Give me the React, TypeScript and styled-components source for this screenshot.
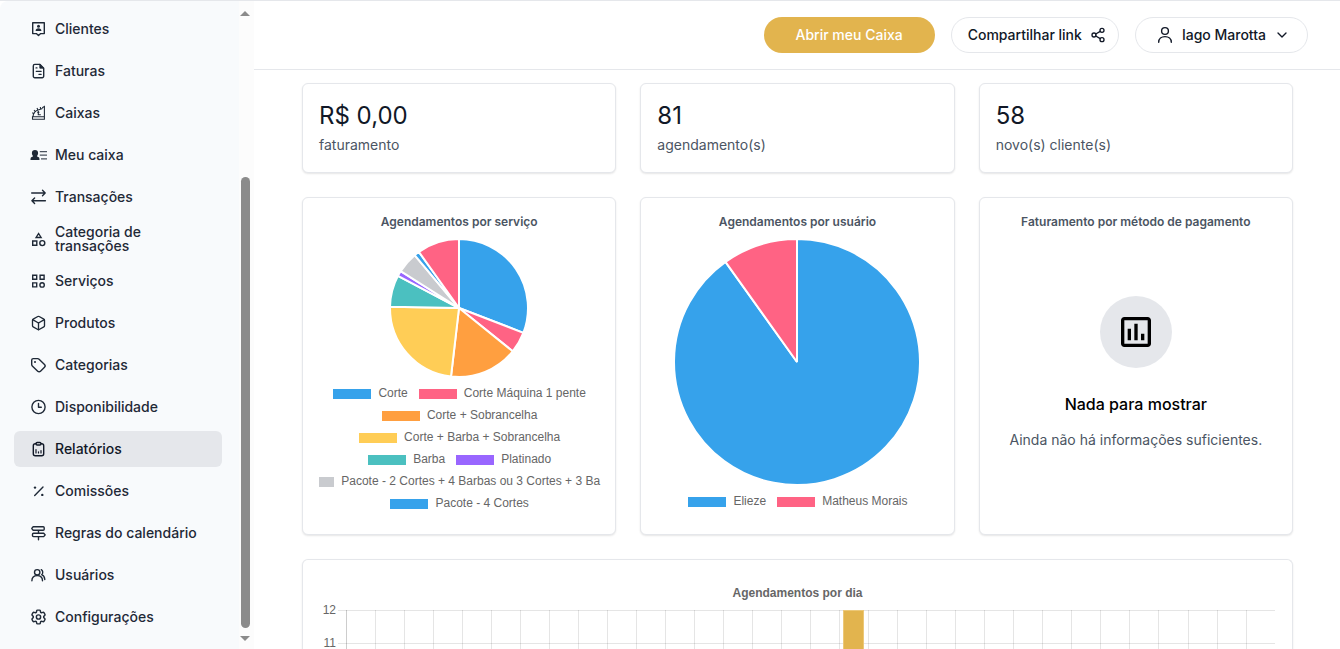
import React from "react";
import styled, { createGlobalStyle } from "styled-components";
import { MdOutlineAssessment } from "react-icons/md";
import { FiBox } from "react-icons/fi";
import { LuChevronDown, LuShare2 } from "react-icons/lu";

const GlobalStyle = createGlobalStyle`
  *, *::before, *::after { box-sizing: border-box; }
  body {
    margin: 0;
    background: #fff;
    color: #111827;
    font-family: Inter, "Liberation Sans", sans-serif;
    font-size: 14px;
    line-height: 20px;
  }
  h2, p, ul { margin: 0; padding: 0; }
`;

const Shell = styled.div`
  display: flex;
  height: 100vh;
  overflow: hidden;
  border-top: 1px solid #e5e7eb;
`;

const Sidebar = styled.aside`
  flex: 0 0 254px;
  display: flex;
  background: #f8fafc;
  border-top-left-radius: 8px;
`;

const Menu = styled.nav`
  flex: 1;
  display: flex;
  flex-direction: column;
  gap: 6px;
  padding: 10px 17px 0 14px;
`;

const MenuItem = styled.a<{ $active?: boolean }>`
  flex: none;
  display: flex;
  align-items: center;
  gap: 8px;
  height: 36px;
  padding: 0 16px;
  border-radius: 6px;
  background: ${(p) => (p.$active ? "#e5e7eb" : "transparent")};
  color: ${(p) => (p.$active ? "#111827" : "#1f2937")};
  font-weight: 500;
  line-height: 14px;
  text-decoration: none;
  svg { flex: none; width: 17px; height: 16px; }
`;

const ScrollTrack = styled.div`
  flex: 0 0 15px;
  display: flex;
  flex-direction: column;
  align-items: center;
  padding: 10px 3px 8px 0;
  background: #fcfcfc;
`;

const ScrollArrow = styled.span<{ $down?: boolean }>`
  border: 5px solid transparent;
  border-width: ${(p) => (p.$down ? "5px 5px 0" : "0 5px 5px")};
  border-color: ${(p) => (p.$down ? "#8b8b8b transparent transparent" : "transparent transparent #8b8b8b")};
`;

const ScrollRail = styled.div`
  flex: 1;
  display: flex;
  flex-direction: column;
  justify-content: flex-end;
  padding-bottom: 8px;
`;

const ScrollThumb = styled.div`
  width: 9px;
  height: calc(74% - 2px);
  border-radius: 5px;
  background: #8b8b8b;
`;

const Main = styled.main`
  flex: 1;
  min-width: 0;
  display: flex;
  flex-direction: column;
`;

const Header = styled.header`
  flex: none;
  display: flex;
  justify-content: flex-end;
  align-items: center;
  gap: 16px;
  height: 69px;
  padding-right: 32px;
  border-bottom: 1px solid #e5e7eb;
`;

const pillPadding = { primary: "0 32px", share: "0 12px 0 16px", user: "0 17px 0 20px" };

const PillButton = styled.button<{ $kind: keyof typeof pillPadding }>`
  display: flex;
  align-items: center;
  gap: 8px;
  height: 36px;
  padding: ${(p) => pillPadding[p.$kind]};
  border: ${(p) => (p.$kind === "primary" ? "0" : "1px solid #e5e7eb")};
  border-radius: 18px;
  background: ${(p) => (p.$kind === "primary" ? "#e2b44e" : "#fff")};
  color: ${(p) => (p.$kind === "primary" ? "#fff" : "#111827")};
  font-family: inherit;
  font-size: 14px;
  font-weight: 500;
  line-height: 20px;
`;

const Content = styled.div`
  flex: 1;
  display: grid;
  grid-template-columns: repeat(3, minmax(0, 1fr));
  grid-template-rows: auto auto 1fr;
  gap: 24px;
  padding: 13px 47px 0 48px;
  overflow: hidden;
`;

const Card = styled.section<{ $tall?: boolean; $full?: boolean }>`
  display: flex;
  flex-direction: column;
  min-height: ${(p) => (p.$tall ? "338px" : "90px")};
  grid-column: ${(p) => (p.$full ? "1 / -1" : "auto")};
  padding: 16px;
  border: 1px solid #e5e7eb;
  border-radius: 6px;
  box-shadow: 0 1px 2px rgba(0, 0, 0, 0.1);
  background: #fff;
  ${(p) => p.$full && "border-bottom: 0; border-bottom-left-radius: 0; border-bottom-right-radius: 0; padding-bottom: 0;"}
`;

const StatValue = styled.p`
  font-size: 24px;
  line-height: 32px;
`;

const StatLabel = styled.p`
  padding-top: 3px;
  color: #4b5563;
`;

const CardTitle = styled.h2`
  padding-bottom: 9px;
  color: #4b5563;
  font-size: 12px;
  font-weight: 600;
  line-height: 16px;
  text-align: center;
`;

const PieSvg = styled.svg<{ $size: number }>`
  flex: none;
  align-self: center;
  width: ${(p) => p.$size}px;
  height: ${(p) => p.$size}px;
`;

const Legend = styled.ul`
  padding-top: 5px;
  list-style: none;
  color: #666;
  font-family: "Liberation Sans", Arial, sans-serif;
  font-size: 12px;
`;

const LegendRow = styled.li`
  display: flex;
  justify-content: center;
  gap: 10px;
  height: 22px;
  line-height: 22px;
  white-space: nowrap;
`;

const LegendEntry = styled.span<{ $color: string; $narrow?: boolean }>`
  flex: none;
  display: flex;
  align-items: center;
  gap: 6px;
  &::before {
    content: "";
    width: ${(p) => (p.$narrow ? "17px" : "40px")};
    height: 12px;
    margin-top: 2px;
    border: 1px solid #fff;
    background: ${(p) => p.$color};
  }
`;

const Empty = styled.div`
  flex: 1;
  display: flex;
  flex-direction: column;
  align-items: center;
  padding-top: 57px;
  color: #4b5563;
`;

const EmptyIcon = styled.span`
  display: flex;
  align-items: center;
  justify-content: center;
  width: 72px;
  height: 72px;
  margin-bottom: 24px;
  border-radius: 50%;
  background: #e5e7eb;
  color: #000;
`;

const EmptyTitle = styled.p`
  padding-bottom: 14px;
  color: #000;
  font-size: 16px;
  font-weight: 500;
  line-height: 24px;
`;

const BarTitle = styled.h2`
  padding: 10px 0;
  color: #666;
  font: bold 12px/14px "Liberation Sans", Arial, sans-serif;
  text-align: center;
`;

const BarChart = styled.div`
  flex: 1;
  display: flex;
  gap: 2px;
`;

const Ticks = styled.div`
  flex: 0 0 17px;
  margin-top: -16px;
  color: #666;
  font: 12px/33px "Liberation Sans", Arial, sans-serif;
  text-align: right;
`;

const Plot = styled.svg`
  flex: 1;
  min-width: 0;
  height: 100%;
  margin-right: 1px;
  overflow: hidden;
`;

const line = {
  viewBox: "0 0 17 16",
  fill: "none",
  stroke: "currentColor",
  strokeWidth: 1.4,
  strokeLinecap: "round",
  strokeLinejoin: "round",
} as const;

const ClientIcon = () => (
  <svg {...line}>
    <path d="M2.700 1.700h11.600v10.900h-3.600l-2.200 2-2.200-2H2.700z" />
    <circle cx="8.5" cy="5.200" r="1.500" fill="currentColor" stroke="none" />
    <path d="M5.600 9.900c0-1.600 1.100-2.600 2.900-2.600s2.900 1 2.900 2.600z" fill="currentColor" stroke="none" />
  </svg>
);

const InvoiceIcon = () => (
  <svg {...line}>
    <path d="M4.800 1.400h5.200l3.700 3.800v8a1.500 1.500 0 0 1-1.500 1.500H4.800a1.500 1.500 0 0 1-1.500-1.500V2.900a1.500 1.500 0 0 1 1.500-1.500z" />
    <path d="M9.800 1.600v3.600h3.700z" fill="currentColor" strokeWidth="0.8" />
    <path d="M6 4.900h1M6.200 8.300h5M8.900 11.300h2.300" strokeWidth="1.200" />
  </svg>
);

const RegisterIcon = () => (
  <svg {...line} strokeWidth={1.1} strokeLinecap="butt" strokeLinejoin="miter">
    <path d="M12.200 2.700l2.200-1.200v12.700H2.500v-2.500h11.900M3 11.500c.3-3 2.300-5.700 5.200-6.500l4.300-1.500" />
    <path d="M2.200 7.800l2 1M4 5l1.600 1.800M7 3l.9 2M10.300 2l.4 2M8.300 6v3.800h2.500M7.300 7.400h2" />
  </svg>
);

const PersonLinesIcon = () => (
  <svg viewBox="0 0 17 16" fill="currentColor">
    <path d="M5 3c2 0 3.100 1.200 3.100 3 0 1.200-.3 2.200-1 2.800v.7l1.600.7c.6.3.8 1.200.8 2.800H.5c0-1.600.2-2.500.8-2.800l1.600-.7v-.7c-.7-.6-1-1.600-1-2.800 0-1.800 1.100-3 3.100-3z" />
    <path d="M9.800 4H17v1.200H9.800zM9.800 7.500H17v1.200H9.800zM11 11.300h6v1.200h-6z" opacity="0.8" />
  </svg>
);

const TransferIcon = () => (
  <svg {...line}>
    <path d="M1.700 4h13.500M12.500 1.300L15.200 4l-2.700 2.700M15.400 11.800H1.900M4.600 9.100l-2.700 2.700 2.700 2.700" />
  </svg>
);

const ShapesIcon = () => (
  <svg {...line} strokeLinejoin="miter">
    <path d="M8.600 2.500l2.500 4H6.100zM2.700 10h4.100v4.200H2.700z" />
    <circle cx="12.300" cy="12.100" r="2.500" />
  </svg>
);

const ServicesIcon = () => (
  <svg {...line} strokeLinejoin="miter">
    <path d="M2.700 2.200h4v4h-4zM10.100 2.200h4v4h-4zM2.700 9.900h4v4h-4z" />
    <circle cx="12.100" cy="11.900" r="2.200" />
  </svg>
);

const TagIcon = () => (
  <svg {...line}>
    <path d="M1.700 3v4.600c0 .5.2 1 .6 1.400l5.400 5.200c.8.8 2 .8 2.800 0l4-4c.8-.8.8-2 0-2.800L9.100 2.200c-.4-.4-.9-.6-1.400-.6H3.200A1.500 1.500 0 0 0 1.700 3z" />
    <circle cx="5" cy="4.900" r="1" fill="currentColor" stroke="none" />
  </svg>
);

const ClockIcon = () => (
  <svg {...line}>
    <circle cx="8.500" cy="8" r="6.600" />
    <path d="M8.500 4.500v3.800h2.800" />
  </svg>
);

const ReportIcon = () => (
  <svg {...line}>
    <rect x="3.300" y="2.700" width="10.400" height="12" rx="2" />
    <rect x="6.100" y="1.500" width="4.800" height="2.500" rx="1" fill="#e5e7eb" />
    <path d="M6 8.500v3.500M8.500 10.800v1.200M11 9.500v2.500" strokeWidth="1.200" />
  </svg>
);

const PercentIcon = () => (
  <svg {...line}>
    <path d="M4.700 12.400l8.300-8.300" />
    <circle cx="5" cy="4.600" r="1.200" fill="currentColor" stroke="none" />
    <circle cx="12.300" cy="11.900" r="1.200" fill="currentColor" stroke="none" />
  </svg>
);

const SignpostIcon = () => (
  <svg {...line}>
    <path d="M3 1.800h10.200a1 1 0 0 1 1 1v1.400a1 1 0 0 1-1 1H3L1.800 3.500zM3.500 8.200h10.200l1.500 1.700-1.500 1.700H3.500a1 1 0 0 1-1-1V9.200a1 1 0 0 1 1-1zM8.500 5.200v3M8.500 11.600v3.200" />
  </svg>
);

const UsersIcon = () => (
  <svg {...line}>
    <circle cx="7.200" cy="5.300" r="2.700" />
    <path d="M1.900 13.800c0-3.200 2.200-5.200 5.300-5.200s5.300 2 5.300 5.200M11.300 2.700c1.800 1 1.900 3.700.4 5 1.900.8 2.900 2.400 3.100 4.800" />
  </svg>
);

const GearIcon = () => (
  <svg {...line} viewBox="1.500 1.500 21 21" strokeWidth={1.900}>
    <path d="M9.594 3.940c.09-.542.56-.94 1.110-.94h2.593c.55 0 1.020.398 1.110.94l.213 1.281c.063.374.313.686.645.87.074.04.147.083.22.127.325.196.72.257 1.075.124l1.217-.456a1.125 1.125 0 0 1 1.370.49l1.296 2.247a1.125 1.125 0 0 1-.26 1.431l-1.003.827c-.293.241-.438.613-.43.992a7.723 7.723 0 0 1 0 .255c-.008.378.137.75.43.991l1.004.827c.424.35.534.955.26 1.430l-1.298 2.247a1.125 1.125 0 0 1-1.369.491l-1.217-.456c-.355-.133-.75-.072-1.076.124a6.470 6.470 0 0 1-.22.128c-.331.183-.581.495-.644.869l-.213 1.281c-.09.543-.56.94-1.110.94h-2.594c-.55 0-1.019-.398-1.110-.94l-.213-1.281c-.062-.374-.312-.686-.644-.87a6.520 6.520 0 0 1-.22-.127c-.325-.196-.72-.257-1.076-.124l-1.217.456a1.125 1.125 0 0 1-1.369-.49l-1.297-2.247a1.125 1.125 0 0 1 .26-1.431l1.004-.827c.292-.24.437-.613.43-.991a6.932 6.932 0 0 1 0-.255c.007-.38-.138-.751-.43-.992l-1.004-.827a1.125 1.125 0 0 1-.26-1.430l1.297-2.247a1.125 1.125 0 0 1 1.370-.491l1.216.456c.356.133.751.072 1.076-.124.072-.044.146-.086.22-.128.332-.183.582-.495.644-.869l.214-1.280z" />
    <circle cx="12" cy="12" r="2.800" />
  </svg>
);

const ProfileIcon = () => (
  <svg {...line} viewBox="0 0 18 18" width="18" height="18">
    <circle cx="9" cy="5" r="3.400" />
    <path d="M2.700 16.300c0-3.600 2.700-5.700 6.300-5.700s6.300 2.100 6.300 5.700" />
  </svg>
);

const menu: { label: string; icon: React.ReactNode; active?: boolean }[] = [
  { label: "Clientes", icon: <ClientIcon /> },
  { label: "Faturas", icon: <InvoiceIcon /> },
  { label: "Caixas", icon: <RegisterIcon /> },
  { label: "Meu caixa", icon: <PersonLinesIcon /> },
  { label: "Transações", icon: <TransferIcon /> },
  { label: "Categoria de transações", icon: <ShapesIcon /> },
  { label: "Serviços", icon: <ServicesIcon /> },
  { label: "Produtos", icon: <FiBox /> },
  { label: "Categorias", icon: <TagIcon /> },
  { label: "Disponibilidade", icon: <ClockIcon /> },
  { label: "Relatórios", icon: <ReportIcon />, active: true },
  { label: "Comissões", icon: <PercentIcon /> },
  { label: "Regras do calendário", icon: <SignpostIcon /> },
  { label: "Usuários", icon: <UsersIcon /> },
  { label: "Configurações", icon: <GearIcon /> },
];

const stats = [
  { value: "R$ 0,00", label: "faturamento" },
  { value: "81", label: "agendamento(s)" },
  { value: "58", label: "novo(s) cliente(s)" },
];

const C = { blue: "#36a2eb", pink: "#ff6384", orange: "#ff9f40", yellow: "#ffcd56", teal: "#4bc0c0", purple: "#9966ff", grey: "#c9cbcf" };

type Slice = { value: number; color: string };

const byService: Slice[] = [
  { value: 25, color: C.blue },
  { value: 4, color: C.pink },
  { value: 13, color: C.orange },
  { value: 19, color: C.yellow },
  { value: 6, color: C.teal },
  { value: 1, color: C.purple },
  { value: 4, color: C.grey },
  { value: 1, color: C.blue },
  { value: 8, color: C.pink },
];

const byUser: Slice[] = [
  { value: 73, color: C.blue },
  { value: 8, color: C.pink },
];

type LegendItem = { text: string; color: string; narrow?: boolean };

const serviceLegend: LegendItem[][] = [
  [{ text: "Corte", color: C.blue }, { text: "Corte Máquina 1 pente", color: C.pink }],
  [{ text: "Corte + Sobrancelha", color: C.orange }],
  [{ text: "Corte + Barba + Sobrancelha", color: C.yellow }],
  [{ text: "Barba", color: C.teal }, { text: "Platinado", color: C.purple }],
  [{ text: "Pacote - 2 Cortes + 4 Barbas ou 3 Cortes + 3 Ba", color: C.grey, narrow: true }],
  [{ text: "Pacote - 4 Cortes", color: C.blue }],
];

const userLegend: LegendItem[][] = [
  [{ text: "Elieze", color: C.blue }, { text: "Matheus Morais", color: C.pink }],
];

function Pie({ slices, size, label }: { slices: Slice[]; size: number; label: string }) {
  const total = slices.reduce((sum, s) => sum + s.value, 0);
  const r = size / 2;
  const at = (v: number) => {
    const a = (v / total) * Math.PI * 2;
    return `${r + r * Math.sin(a)} ${r - r * Math.cos(a)}`;
  };
  let start = 0;
  return (
    <PieSvg $size={size} viewBox={`0 0 ${size} ${size}`} role="img" aria-label={label}>
      {slices.map((s, i) => {
        const from = start;
        start += s.value;
        const large = s.value > total / 2 ? 1 : 0;
        return (
          <path
            key={i}
            d={`M${r} ${r}L${at(from)}A${r} ${r} 0 ${large} 1 ${at(start)}Z`}
            fill={s.color}
            stroke="#fff"
            strokeWidth={2}
            strokeLinejoin="bevel"
          />
        );
      })}
    </PieSvg>
  );
}

const LegendList = ({ rows }: { rows: LegendItem[][] }) => (
  <Legend>
    {rows.map((row, i) => (
      <LegendRow key={i}>
        {row.map((item) => (
          <LegendEntry key={item.text} $color={item.color} $narrow={item.narrow}>
            {item.text}
          </LegendEntry>
        ))}
      </LegendRow>
    ))}
  </Legend>
);

const COLUMNS = 32;
const PEAK = 17;
const TICK_GAP = 33;
const ticks = [12, 11];

/* The grid starts 8px in from the plot edge, so a column is slightly under 1/32 of the width. */
const column = (i: number) => `${(i / COLUMNS) * 99.1}%`;

const DailyPlot = () => (
  <Plot shapeRendering="crispEdges" role="img" aria-label="Agendamentos por dia">
    {ticks.map((t, i) => (
      <rect key={t} x="0" y={i * TICK_GAP} width="100%" height="1" fill="rgba(0,0,0,.1)" />
    ))}
    <svg x="8" y="0" width="100%" height="100%" overflow="visible">
      <rect x="0" width="1" height="100%" fill="rgba(0,0,0,.1)" />
      {Array.from({ length: COLUMNS }, (_, i) => (
        <rect key={i} x={column(i)} width="1" height="100%" fill="rgba(0,0,0,.1)" />
      ))}
      <svg x={column(PEAK)} overflow="visible">
        <rect x="4" width="21" height="100%" fill="#ecc878" />
        <rect x="5" y="1" width="19" height="100%" fill="#e2b44e" />
      </svg>
    </svg>
  </Plot>
);

export default function App() {
  return (
    <>
      <GlobalStyle />
      <Shell>
        <Sidebar>
          <Menu>
            {menu.map((m) => (
              <MenuItem key={m.label} href="#" $active={m.active}>
                {m.icon}
                {m.label}
              </MenuItem>
            ))}
          </Menu>
          <ScrollTrack>
            <ScrollArrow />
            <ScrollRail>
              <ScrollThumb />
            </ScrollRail>
            <ScrollArrow $down />
          </ScrollTrack>
        </Sidebar>
        <Main>
          <Header>
            <PillButton $kind="primary">Abrir meu Caixa</PillButton>
            <PillButton $kind="share">
              Compartilhar link
              <LuShare2 size={16} />
            </PillButton>
            <PillButton $kind="user">
              <ProfileIcon />
              Iago Marotta
              <LuChevronDown size={16} />
            </PillButton>
          </Header>
          <Content>
            {stats.map((s) => (
              <Card key={s.label}>
                <StatValue>{s.value}</StatValue>
                <StatLabel>{s.label}</StatLabel>
              </Card>
            ))}
            <Card $tall>
              <CardTitle>Agendamentos por serviço</CardTitle>
              <Pie slices={byService} size={138} label="Agendamentos por serviço" />
              <LegendList rows={serviceLegend} />
            </Card>
            <Card $tall>
              <CardTitle>Agendamentos por usuário</CardTitle>
              <Pie slices={byUser} size={246} label="Agendamentos por usuário" />
              <LegendList rows={userLegend} />
            </Card>
            <Card $tall>
              <CardTitle>Faturamento por método de pagamento</CardTitle>
              <Empty>
                <EmptyIcon>
                  <MdOutlineAssessment size={40} />
                </EmptyIcon>
                <EmptyTitle>Nada para mostrar</EmptyTitle>
                <p>Ainda não há informações suficientes.</p>
              </Empty>
            </Card>
            <Card $full>
              <BarTitle>Agendamentos por dia</BarTitle>
              <BarChart>
                <Ticks>
                  {ticks.map((t) => (
                    <div key={t}>{t}</div>
                  ))}
                </Ticks>
                <DailyPlot />
              </BarChart>
            </Card>
          </Content>
        </Main>
      </Shell>
    </>
  );
}
